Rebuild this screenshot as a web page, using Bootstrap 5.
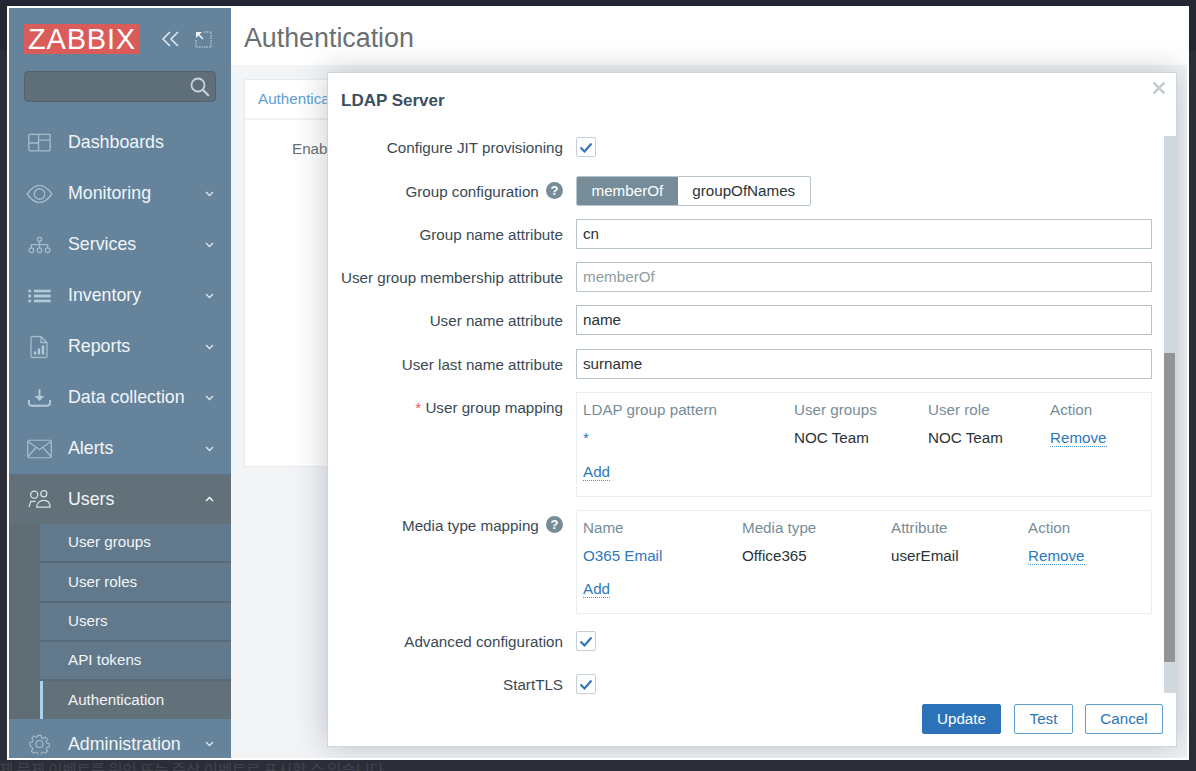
<!DOCTYPE html>
<html lang="en">

<head>
  <meta charset="UTF-8">
  <title>Authentication</title>
  <link href="https://cdn.jsdelivr.net/npm/bootstrap@5.3.3/dist/css/bootstrap.min.css" rel="stylesheet" />
  <style>
    html, body { height: 100%; overflow: hidden; }
    body { background: linear-gradient(#242733 0 50px, #2b2e38 50px); font-family: "Liberation Sans", Arial, sans-serif; color: #3a4a55; }
    .under-text { position: absolute; left: -1px; top: 760px; font-family: "Noto Sans CJK KR", sans-serif; font-size: 15.4px; line-height: 18px; color: #40444d; white-space: nowrap; }
    .app-frame { position: absolute; left: 7px; top: 6px; width: 1182px; height: 754px; border: 2px solid #fff; display: flex; background: #f2f4f6; overflow: hidden; }
    .side-bar { width: 222px; flex: none; background: #65849c; color: #f2f5f7; display: flex; flex-direction: column; }
    .logo-row { height: 54px; flex: none; padding: 16px 0 0 15px; gap: 21px; }
    .logo-box { background: #d95c5a; color: #fff; font-size: 29px; line-height: 30px; width: 116px; text-align: center; letter-spacing: .8px; }
    .search-box { height: 31px; flex: none; margin: 9px 15px 15px; background: #5f6f7a; border: 1px solid #53626d; border-radius: 4px; padding-right: 5px; }
    .menu-row { height: 51px; flex: none; font-size: 17.8px; padding-left: 59px; padding-right: 17px; position: relative; }
    .menu-row > svg.ico { position: absolute; left: 19px; top: 50%; transform: translateY(-50%); }
    .menu-row.is-open { background: #62707a; height: 50px; }
    .sub-wrap { flex: none; background: #5f6c73; padding-left: 31px; }
    .sub-row { height: 39.3px; background: #62798c; border-bottom: 2px solid #566a7a; font-size: 15.2px; padding-left: 28px; }
    .sub-row.is-active { height: 37.5px; background: #62707a; border-left: 3px solid #a7d3ee; padding-left: 25px; border-bottom: 0; }
    .main-col { flex: 1; min-width: 0; position: relative; }
    .top-head { height: 57px; background: #fff; padding: 4px 0 0 13px; font-size: 26.8px; color: #6b6f72; }
    .tab-card { position: absolute; left: 13px; top: 71px; width: 900px; height: 388px; background: #fff; border: 1px solid #e8ebee; }
    .tab-head { height: 40px; border-bottom: 2px solid #eff1f3; padding-left: 13px; font-size: 15.2px; color: #5da0d4; }
    .tab-label { position: absolute; font-size: 15.2px; color: #6b6f72; }
    .modal-box { position: absolute; left: 96px; top: 64px; width: 850px; height: 675px; background: #fff; border: 1px solid #cfd6da; box-shadow: 0 0 30px rgba(70,85,95,.32); display: flex; flex-direction: column; }
    .modal-title { height: 63px; flex: none; padding: 18px 0 0 13px; font-size: 17px; font-weight: 700; color: #3a4f5f; line-height: 20px; }
    .close-x { position: absolute; right: 10px; top: 8px; }
    .modal-scroll { flex: 1; min-height: 0; position: relative; padding-right: 24px; }
    .scroll-track { position: absolute; right: 0; top: 0; bottom: 0; width: 12px; background: #d0d9dd; }
    .scroll-thumb { position: absolute; left: 0; right: 1px; top: 217px; height: 309px; background: #919598; }
    .form-line { display: grid; grid-template-columns: 222px 1fr; column-gap: 13px; margin-left: 13px; margin-bottom: 13px; min-height: 30px; font-size: 15.2px; color: #3a4a55; }
    .line-label { text-align: right; line-height: 31px; margin-bottom: -1px; white-space: nowrap; }
    .req-star { color: #e45959; }
    .help-dot { display: inline-flex; width: 17px; height: 17px; border-radius: 50%; background: #768d99; color: #fff; font-size: 13px; font-weight: 700; align-items: center; justify-content: center; margin-left: 3px; vertical-align: 2px; line-height: 1; }
    .check-box { width: 20px; height: 20px; margin-top: 5px; border: 1px solid #c5d0d6; border-radius: 2px; display: flex; align-items: center; justify-content: center; }
    .seg-group { display: inline-flex; height: 30px; border: 1px solid #b7c4cc; border-radius: 2px; overflow: hidden; }
    .seg-item { padding: 0 14.5px; line-height: 28px; color: #2a3338; }
    .seg-item.is-on { background: #768d99; color: #fff; }
    .text-field { height: 30px; border: 1px solid #b7c4cc; padding: 0 6px; line-height: 28px; color: #2a3338; }
    .text-field.is-ghost { color: #909da5; }
    .map-box { border: 1px solid #ebeef0; padding: 3px 6px 0; position: relative; }
    .map-grid { display: grid; line-height: 28px; color: #2a3338; }
    .map-head { color: #768d99; }
    .blue-link { color: #2b78bd; }
    .dot-link { color: #2b78bd; border-bottom: 1px dotted #4a94cf; line-height: 17px; display: inline-block; }
    .modal-foot { height: 53px; flex: none; padding: 11px 13px 0 0; gap: 12px; }
    .z-btn { height: 30px; border-radius: 2px; font-size: 15.2px; line-height: 28px; text-align: center; border: 1px solid #5d9fcf; color: #2f74b5; background: #fff; }
    .z-btn.is-main { background: #2b72b8; border-color: #2b72b8; color: #fff; margin-right: 1px; }
  </style>
</head>

<body>
  <div class="under-text">제 문제 이벤트를 원인 또는 증상 이벤트로 표시할 수 있습니다</div>
  <div class="app-frame">
    <aside class="side-bar">
      <div class="logo-row d-flex align-items-start">
        <div class="logo-box">ZABBIX</div>
        <div class="d-flex align-items-center gap-3" style="height:30px">
          <svg width="18" height="16" viewBox="0 0 18 16" fill="none" stroke="#dfe7ec" stroke-width="1.6"><path d="M9 1 2 8l7 7M17 1l-7 7 7 7"/></svg>
          <svg width="17" height="17" viewBox="0 0 17 17" fill="none" stroke="#cfdae1" stroke-width="1" stroke-dasharray="1.5 1"><path d="M9 1h7v15H1V9"/><path d="M1 1h6L1 7z" fill="#eef2f4" stroke="none"/><path d="M3 3l5 5" stroke="#eef2f4" stroke-width="1.6" stroke-dasharray="none"/></svg>
        </div>
      </div>
      <div class="search-box d-flex align-items-center justify-content-end">
        <svg width="20" height="20" viewBox="0 0 20 20" fill="none" stroke="#c8d3da" stroke-width="1.8"><circle cx="8" cy="8" r="6.500"/><path d="m12.800 12.800 6 6" stroke-width="2.200"/></svg>
      </div>
      <div class="menu-row d-flex align-items-center"><svg class="ico" width="23" height="19" viewBox="0 0 24 20" fill="none" stroke="#a6bccb" stroke-width="1.4"><rect x=".8" y=".8" width="22.4" height="17.4" rx="1"/><path d="M11 1v17M11 10H1M11 7h12"/></svg>Dashboards</div>
      <div class="menu-row d-flex align-items-center justify-content-between"><svg class="ico" style="left:17px" width="27" height="19" viewBox="0 0 28 20" fill="none" stroke="#a6bccb" stroke-width="1.4"><path d="M1 10C6 3 10 1 14 1s8 2 13 9c-5 7-9 9-13 9S6 17 1 10z"/><circle cx="14" cy="10" r="5.5"/></svg>Monitoring<svg width="9" height="6" viewBox="0 0 9 6" fill="none" stroke="#dfe7ec" stroke-width="1.3"><path d="m1 1 3.5 3.5L8 1"/></svg></div>
      <div class="menu-row d-flex align-items-center justify-content-between"><svg class="ico" width="23" height="18" viewBox="0 0 24 18" fill="none" stroke="#a6bccb" stroke-width="1.3"><circle cx="12" cy="3" r="2.2"/><circle cx="3.5" cy="14.5" r="2.4"/><circle cx="12" cy="14.5" r="2.4"/><circle cx="20.5" cy="14.5" r="2.4"/><path d="M12 5v7M3.5 12V8.5h17V12"/></svg>Services<svg width="9" height="6" viewBox="0 0 9 6" fill="none" stroke="#dfe7ec" stroke-width="1.3"><path d="m1 1 3.5 3.5L8 1"/></svg></div>
      <div class="menu-row d-flex align-items-center justify-content-between"><svg class="ico" width="23" height="13" viewBox="0 0 24 14" fill="#b5cad8"><rect y="0" width="3" height="3"/><rect y="5.5" width="3" height="3"/><rect y="11" width="3" height="3"/><rect x="6" y="0" width="18" height="3"/><rect x="6" y="5.5" width="18" height="3"/><rect x="6" y="11" width="18" height="3"/></svg>Inventory<svg width="9" height="6" viewBox="0 0 9 6" fill="none" stroke="#dfe7ec" stroke-width="1.3"><path d="m1 1 3.5 3.5L8 1"/></svg></div>
      <div class="menu-row d-flex align-items-center justify-content-between"><svg class="ico" style="left:21px" width="18" height="23" viewBox="0 0 18 23" fill="none" stroke="#a6bccb" stroke-width="1.3"><path d="M2.5 1H11l6 6v13.5a1.5 1.5 0 0 1-1.5 1.5h-13A1.5 1.5 0 0 1 1 20.500v-18A1.500 1.500 0 0 1 2.500 1zM11 1v6h6"/><path d="M5 19v-3M9 19v-6M13 19v-9" stroke="#b5cad8" stroke-width="2.400"/></svg>Reports<svg width="9" height="6" viewBox="0 0 9 6" fill="none" stroke="#dfe7ec" stroke-width="1.3"><path d="m1 1 3.5 3.5L8 1"/></svg></div>
      <div class="menu-row d-flex align-items-center justify-content-between"><svg class="ico" width="23" height="18" viewBox="0 0 24 18" fill="none" stroke="#b5cad8" stroke-width="2"><path d="M12 0v10"/><path d="M7 7h10l-5 5z" fill="#b5cad8" stroke="none"/><path d="M1 11v3a3 3 0 0 0 3 3h16a3 3 0 0 0 3-3v-3"/></svg>Data collection<svg width="9" height="6" viewBox="0 0 9 6" fill="none" stroke="#dfe7ec" stroke-width="1.3"><path d="m1 1 3.5 3.5L8 1"/></svg></div>
      <div class="menu-row d-flex align-items-center justify-content-between"><svg class="ico" style="left:18px" width="25" height="19" viewBox="0 0 25 19" fill="none" stroke="#a6bccb" stroke-width="1.3"><rect x=".7" y=".7" width="23.6" height="17.600" rx="2"/><path d="m1 2 11.500 8L24 2M1 17l8-9M24 17l-8-9"/></svg>Alerts<svg width="9" height="6" viewBox="0 0 9 6" fill="none" stroke="#dfe7ec" stroke-width="1.3"><path d="m1 1 3.5 3.5L8 1"/></svg></div>
      <div class="menu-row is-open d-flex align-items-center justify-content-between"><svg class="ico" width="23" height="19" viewBox="0 0 24 19" fill="none" stroke="#d6e0e6" stroke-width="1.3"><circle cx="6.500" cy="5" r="3.700"/><circle cx="16.500" cy="4" r="3.200"/><path d="M1 18l2-6h5M9 18c0-4 3-7 7.500-7S23 14 23 18z"/></svg>Users<svg width="9" height="6" viewBox="0 0 9 6" fill="none" stroke="#f2f5f7" stroke-width="1.5"><path d="m1 5 3.5-3.500L8 5"/></svg></div>
      <div class="sub-wrap">
        <div class="sub-row d-flex align-items-center">User groups</div>
        <div class="sub-row d-flex align-items-center">User roles</div>
        <div class="sub-row d-flex align-items-center">Users</div>
        <div class="sub-row d-flex align-items-center">API tokens</div>
        <div class="sub-row is-active d-flex align-items-center">Authentication</div>
      </div>
      <div class="menu-row d-flex align-items-center justify-content-between"><svg class="ico" style="left:20px" width="21" height="21" viewBox="0 0 21 21" fill="none" stroke="#a6bccb" stroke-width="1.2"><circle cx="10.500" cy="10.500" r="3.500"/><path d="M8.800 1h3.400l.6 2.700 1.900.8 2.400-1.500 2.400 2.400-1.500 2.400.8 1.900 2.700.6v3.400l-2.700.6-.8 1.900 1.500 2.400-2.400 2.400-2.400-1.500-1.900.8-.6 2.700H8.800l-.6-2.700-1.900-.8-2.400 1.500-2.400-2.400 1.500-2.400-.8-1.900L0 12.200V8.800l2.700-.6.8-1.900L2 3.900l2.400-2.400 2.400 1.500 1.900-.8z" transform="translate(1 1) scale(.9)"/></svg>Administration<svg width="9" height="6" viewBox="0 0 9 6" fill="none" stroke="#dfe7ec" stroke-width="1.3"><path d="m1 1 3.5 3.5L8 1"/></svg></div>
    </aside>
    <main class="main-col">
      <div class="top-head d-flex align-items-center">Authentication</div>
      <div class="tab-card">
        <div class="tab-head d-flex align-items-center">Authentica</div>
      </div>
      <div class="tab-label" style="left:61px;top:130px">Enab</div>
      <div class="modal-box">
        <svg class="close-x" width="14" height="14" viewBox="0 0 14 14" stroke="#c5ced3" stroke-width="2.600"><path d="m1.500 1.500 11 11M12.500 1.500l-11 11"/></svg>
        <div class="modal-title">LDAP Server</div>
        <div class="modal-scroll">
          <div class="scroll-track"><div class="scroll-thumb"></div></div>
          <div class="form-line" style="margin-top:-4px;margin-bottom:14px">
            <div class="line-label">Configure JIT provisioning</div>
            <div class="check-box"><svg width="14" height="11" viewBox="0 0 14 11" fill="none" stroke="#2b72b8" stroke-width="2"><path d="m1.500 5.500 4 4 7-8"/></svg></div>
          </div>
          <div class="form-line">
            <div class="line-label">Group configuration <span class="help-dot">?</span></div>
            <div><div class="seg-group"><div class="seg-item is-on">memberOf</div><div class="seg-item">groupOfNames</div></div></div>
          </div>
          <div class="form-line">
            <div class="line-label">Group name attribute</div>
            <div class="text-field">cn</div>
          </div>
          <div class="form-line">
            <div class="line-label">User group membership attribute</div>
            <div class="text-field is-ghost">memberOf</div>
          </div>
          <div class="form-line" style="margin-bottom:14px">
            <div class="line-label">User name attribute</div>
            <div class="text-field">name</div>
          </div>
          <div class="form-line">
            <div class="line-label">User last name attribute</div>
            <div class="text-field">surname</div>
          </div>
          <div class="form-line">
            <div class="line-label"><span class="req-star">*</span> User group mapping</div>
            <div class="map-box" style="height:105px">
              <div class="map-grid" style="grid-template-columns:211px 134px 122px 1fr">
                <div class="map-head">LDAP group pattern</div><div class="map-head">User groups</div><div class="map-head">User role</div><div class="map-head">Action</div>
                <div class="blue-link">*</div><div>NOC Team</div><div>NOC Team</div><div><span class="dot-link">Remove</span></div>
              </div>
              <div style="margin-top:9px"><span class="dot-link">Add</span></div>
            </div>
          </div>
          <div class="form-line" style="margin-bottom:12px">
            <div class="line-label">Media type mapping <span class="help-dot">?</span></div>
            <div class="map-box" style="height:104px">
              <div class="map-grid" style="grid-template-columns:159px 149px 137px 1fr">
                <div class="map-head">Name</div><div class="map-head">Media type</div><div class="map-head">Attribute</div><div class="map-head">Action</div>
                <div class="blue-link">O365 Email</div><div>Office365</div><div>userEmail</div><div><span class="dot-link">Remove</span></div>
              </div>
              <div style="margin-top:8px"><span class="dot-link">Add</span></div>
            </div>
          </div>
          <div class="form-line">
            <div class="line-label">Advanced configuration</div>
            <div class="check-box"><svg width="14" height="11" viewBox="0 0 14 11" fill="none" stroke="#2b72b8" stroke-width="2"><path d="m1.500 5.500 4 4 7-8"/></svg></div>
          </div>
          <div class="form-line">
            <div class="line-label">StartTLS</div>
            <div class="check-box"><svg width="14" height="11" viewBox="0 0 14 11" fill="none" stroke="#2b72b8" stroke-width="2"><path d="m1.500 5.500 4 4 7-8"/></svg></div>
          </div>
        </div>
        <div class="modal-foot d-flex justify-content-end">
          <div class="z-btn is-main" style="width:79px">Update</div>
          <div class="z-btn" style="width:59px">Test</div>
          <div class="z-btn" style="width:78px">Cancel</div>
        </div>
      </div>
    </main>
  </div>
  <script src="https://cdn.jsdelivr.net/npm/bootstrap@5.3.3/dist/js/bootstrap.bundle.min.js"></script>
</body>

</html>
